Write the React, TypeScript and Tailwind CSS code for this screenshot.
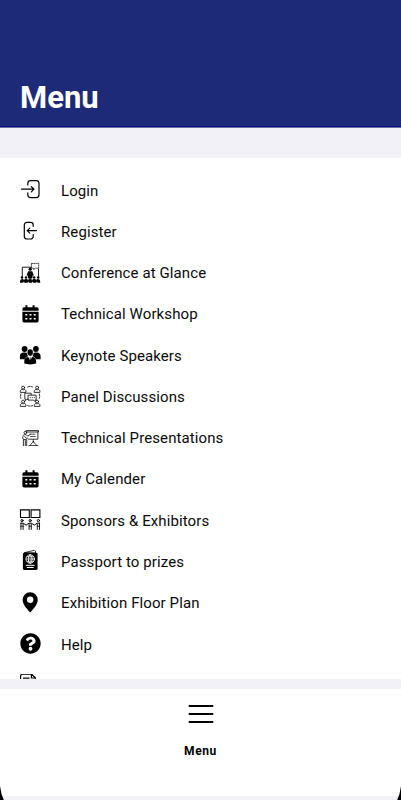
import type { ReactNode } from 'react';
import { FaQuestionCircle } from 'react-icons/fa';

type MenuItem = {
  label: string;
  icon: ReactNode;
};

function Icon({ children }: { children: ReactNode }) {
  return (
    <svg
      viewBox="0 0 22 22"
      className="h-[22px] w-[22px]"
      fill="none"
      stroke="#000"
      strokeWidth="1.2"
      strokeLinecap="round"
      strokeLinejoin="round"
    >
      {children}
    </svg>
  );
}

const loginIcon = (
  <Icon>
    <path d="M8.8 6V4.400a2.800 2.800 0 0 1 2.800-2.800h5.600A2.800 2.800 0 0 1 20 4.400v11.400a2.800 2.800 0 0 1-2.800 2.800h-5.600a2.800 2.800 0 0 1-2.800-2.800v-1.900" />
    <path d="M2.600 10.200h12.200M12.400 7.700l2.600 2.500-2.600 2.600" />
  </Icon>
);

const registerIcon = (
  <Icon>
    <path d="M14.200 6.300V5a2.600 2.600 0 0 0-2.600-2.600H7.900A2.600 2.600 0 0 0 5.300 5v11.400A2.600 2.600 0 0 0 7.900 19h3.700a2.600 2.600 0 0 0 2.600-2.600v-1.800" />
    <path d="M17.500 10.600H8.200M10.800 8.100l-2.600 2.500 2.600 2.600" />
  </Icon>
);

const conferenceIcon = (
  <Icon>
    <path d="M12 5.200H3.300v10.600M19.500 7v8.800" strokeWidth="0.9" />
    <path d="M12.400 1.400h7.300v4.800h-3.400l-1.500 1.400V6.200h-2.400z" strokeWidth="0.7" strokeDasharray="1.2 1" />
    <circle cx="11.200" cy="7.200" r="1.600" fill="#000" stroke="none" />
    <path d="M7.600 13.400l1.500-4.200h4.200l1.500 4.200zM8.700 13.400h5l-.5 3H9.200z" fill="#000" stroke="none" />
    <g fill="#000" stroke="none">
      <circle cx="3" cy="15.500" r="1.300" />
      <circle cx="7" cy="15.500" r="1.300" />
      <circle cx="11.100" cy="15.500" r="1.200" />
      <circle cx="15.200" cy="15.500" r="1.300" />
      <circle cx="19.200" cy="15.500" r="1.300" />
      <path d="M1 19.600q0-2.500 2-2.500t2 1.400q0-1.400 2-1.400t2 1.400q0-1.400 2.100-1.400t2 1.400q0-1.400 2.100-1.400t2 1.400q0-1.400 2-1.400t2 2.500v1.100h-2.600l-.7-1.200-.7 1.200h-3l-.6-1.200-.6 1.200H10l-.7-1.200-.7 1.200H5.500l-.7-1.200-.7 1.200H1z" />
    </g>
  </Icon>
);

const calendarIcon = (
  <Icon>
    <path
      d="M6.400 2.300h2v2h5.200v-2h2v2H18a1.600 1.600 0 0 1 1.600 1.600v1.900H3.400V5.900A1.600 1.600 0 0 1 5 4.300h1.400z"
      fill="#000"
      stroke="none"
    />
    <path
      fillRule="evenodd"
      d="M3.400 8.700h16.200v9.100a1.600 1.600 0 0 1-1.600 1.600H5a1.600 1.600 0 0 1-1.600-1.600zM6.300 11v1.600h2V11zM10.500 11v1.600h2V11zM14.700 11v1.600h2V11zM6.300 15v1.600h2V15zM10.500 15v1.600h2V15zM14.700 15v1.600h2V15z"
      fill="#000"
      stroke="none"
    />
  </Icon>
);

const speakersIcon = (
  <Icon>
    <g fill="#000" stroke="none">
      <circle cx="5.600" cy="5" r="2.900" />
      <circle cx="16.900" cy="5" r="2.900" />
      <path d="M.9 15.300v-3.300c0-2.400 1.600-3.600 3.600-3.600h2c.8 0 1.200.2 1.600.6-.1 1.500.3 2.400 1.100 3.200-2 .5-3.200 1.700-3.600 3.100z" />
      <path d="M21.600 15.300v-3.300c0-2.400-1.600-3.600-3.600-3.600h-2c-.8 0-1.200.2-1.600.6.1 1.500-.3 2.400-1.100 3.200 2 .5 3.200 1.700 3.600 3.100z" />
      <ellipse cx="11.200" cy="8.600" rx="2.700" ry="3.300" />
      <path d="M5.300 19.600v-2.800c0-2.500 1.700-3.700 4.100-3.900l1.400 3 .1-1.500-.4-1h1.400l-.4 1 .1 1.500 1.400-3c2.400.2 4.100 1.400 4.100 3.900v2.800c-3 1.100-8.800 1.100-11.800 0z" />
    </g>
  </Icon>
);

function Bust({ x, y }: { x: number; y: number }) {
  return (
    <g transform={`translate(${x} ${y})`}>
      <circle cx="3" cy="1.700" r="1.500" />
      <path d="M.2 6.100V5.200c0-1 1-1.600 2-1.700l.8.8.8-.8c1 .1 2 .7 2 1.700v.900z" />
    </g>
  );
}

const panelIcon = (
  <Icon>
    <g strokeWidth="0.8">
      <Bust x={1.1} y={0.9} />
      <Bust x={15.1} y={0.9} />
      <Bust x={1.1} y={14.9} />
      <Bust x={15.1} y={14.9} />
      <path d="M8.600 1.900q2.500-1 5 0M8.600 20.600q2.500 1 5 0M1.900 9q-.8 2.200 0 4.400M20.300 9q.8 2.200 0 4.400" strokeDasharray="2 1.200" />
      <path d="M9 14.200H7.900l-1.300 1.400v-1.500H5.800V8.200h6.400v1.700" />
      <path d="M9.400 10.200h7.700v4.900h-1v1.500l-1.500-1.500H9.400z" />
      <path d="M11.200 12.600h.1M13.200 12.600h.1M15.200 12.600h.1" strokeWidth="0.9" />
    </g>
  </Icon>
);

const presentationIcon = (
  <Icon>
    <g strokeWidth="0.8">
      <path d="M7.500 3.600h12v1.400h-12zM18.900 5v7.200H9.600" />
      <path d="M11 7.200h5M11.500 9.500h4.800M14.300 12.500v2.900M14.300 14.400l-3.300 4M14.300 14.400l3.300 4M10 18.500h9" strokeWidth="0.7" />
      <circle cx="6.300" cy="5.700" r="1.300" />
      <path d="M4.400 18.600v-6.200L3.700 11c0-2.400.8-3.300 2-3.300h1.500l1.500 1.500 2.600-1.900M5.800 9.500l1.600 1.900 1.300-.3M5 12.600h2.700v6M6.300 13.600v5" />
    </g>
  </Icon>
);

const sponsorsIcon = (
  <Icon>
    <path d="M1.500 .9h8.800v7.600H1.500zM12.100 .9h8.800v7.600h-8.800z" strokeWidth="1.1" strokeLinejoin="miter" />
    <g strokeWidth="1">
      <circle cx="3" cy="11.600" r="1.100" />
      <circle cx="11.200" cy="11.600" r="1.100" />
      <circle cx="19.400" cy="11.600" r="1.100" />
      <path d="M1.700 14.200h2.500l2.900 1.900 2.900-1.900h2.400l2.900 1.900 2.900-1.900h2.500" />
      <path d="M1.900 14.200v6.300M4.100 15v5.500M10.100 15v5.500M12.300 15v5.500M18.300 15v5.500M20.500 14.200v6.300M1.900 17.200h2.200M10.100 17.200h2.200M18.300 17.200h2.200" strokeWidth="0.9" />
    </g>
  </Icon>
);

const passportIcon = (
  <Icon>
    <path d="M5.500 2.600L15.500.3l1 .8v1.500z" strokeWidth="0.8" />
    <rect x="3.900" y="2.700" width="14.700" height="17.300" rx="1.400" fill="#000" stroke="none" />
    <g stroke="#fff" strokeWidth="0.9">
      <circle cx="11.200" cy="9" r="4.200" />
      <ellipse cx="11.200" cy="9" rx="1.900" ry="4.200" />
      <path d="M7 9h8.400M8 6.700h6.400M8 11.300h6.400M11.200 4.800v8.400" strokeWidth="0.6" />
      <path d="M7.200 15.300h8M8.200 17.500h6" strokeWidth="1" />
    </g>
  </Icon>
);

const pinIcon = (
  <Icon>
    <path
      fillRule="evenodd"
      d="M11.200.2a7.600 7.600 0 0 1 7.600 7.600c0 4.200-3.800 8.600-7.600 12.700C7.400 16.400 3.600 12 3.600 7.800A7.600 7.600 0 0 1 11.200.2zM11.200 4.600a3.200 3.200 0 1 0 0 6.400 3.200 3.200 0 0 0 0-6.400z"
      fill="#000"
      stroke="none"
    />
  </Icon>
);

const documentIcon = (
  <Icon>
    <path d="M1.600 21V2a1.800 1.800 0 0 1 1.800-1.800h9.200l3.700 3.600V21M12.400.4v3.600h3.900M4.500 4.200h5.500" />
  </Icon>
);

const ITEMS: MenuItem[] = [
  { label: 'Login', icon: loginIcon },
  { label: 'Register', icon: registerIcon },
  { label: 'Conference at Glance', icon: conferenceIcon },
  { label: 'Technical Workshop', icon: calendarIcon },
  { label: 'Keynote Speakers', icon: speakersIcon },
  { label: 'Panel Discussions', icon: panelIcon },
  { label: 'Technical Presentations', icon: presentationIcon },
  { label: 'My Calender', icon: calendarIcon },
  { label: 'Sponsors & Exhibitors', icon: sponsorsIcon },
  { label: 'Passport to prizes', icon: passportIcon },
  { label: 'Exhibition Floor Plan', icon: pinIcon },
  { label: 'Help', icon: <FaQuestionCircle className="ml-[0.7px] h-[21px] w-[21px]" /> },
  { label: '', icon: documentIcon },
];

export default function App() {
  return (
    <div className="relative flex h-[800px] w-[401px] flex-col overflow-hidden bg-[#f2f1f7] font-[Roboto,sans-serif] text-black">
      <header className="flex h-[128px] shrink-0 items-end border-b border-[#6a6fa6] bg-[#1d2a78]">
        <div className="flex h-[49px] w-full border-b border-[#0c0c7a] pl-5">
          <h1 className="text-[31px] leading-[40px] font-bold text-white">Menu</h1>
        </div>
      </header>

      <ul className="mt-[30px] h-[521px] shrink-0 overflow-hidden bg-white pt-[11.4px]">
        {ITEMS.map((item, i) => (
          <li key={i} className="flex h-[41.27px] items-center pl-[19px]">
            <span className="flex w-[42px] shrink-0">{item.icon}</span>
            <span className="pt-[1.2px] text-[15px] leading-5 tracking-[0.1px] text-[#0a0a0a]">{item.label}</span>
          </li>
        ))}
      </ul>

      <nav className="mt-[10px] flex h-[107px] shrink-0 flex-col items-center bg-white pt-[15px]">
        <svg viewBox="0 0 26 20" className="h-5 w-[26px]" stroke="#000" strokeWidth="1.9" strokeLinecap="round">
          <path d="M1.500 2h23M1.500 10h23M1.500 18h23" />
        </svg>
        <span className="mt-[19px] text-[12px] leading-4 font-bold tracking-[0.6px]">Menu</span>
      </nav>

      {/* rounded bottom corners of the device screen */}
      <svg viewBox="0 0 401 14" className="absolute bottom-0 left-0 h-[14px] w-[401px]" fill="#000">
        <path d="M0 0q1 8 3.800 14H0zM401 0q-1 8-3.800 14h3.800z" />
      </svg>
    </div>
  );
}
